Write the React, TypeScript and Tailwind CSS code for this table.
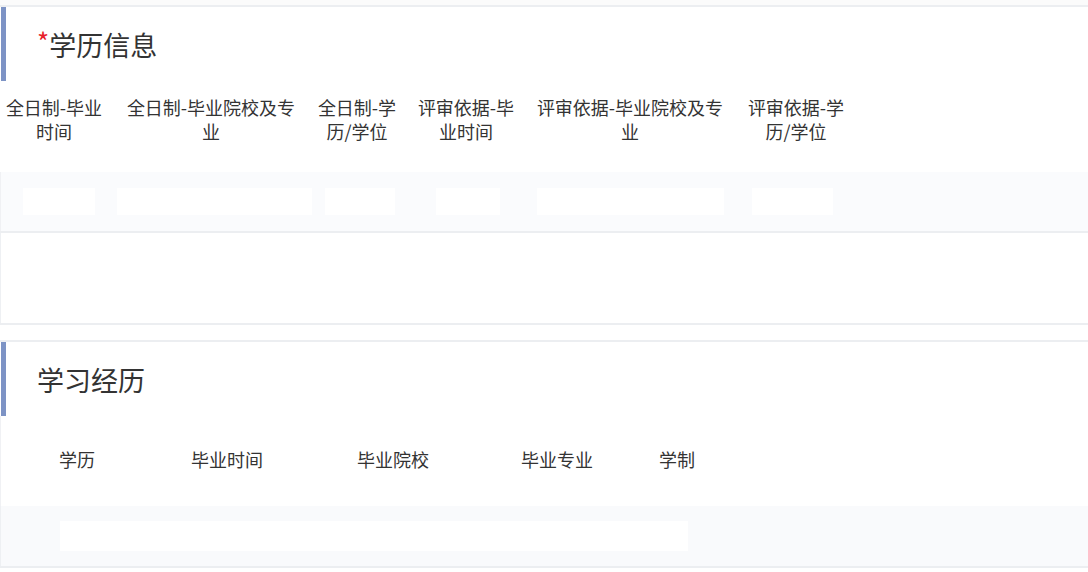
import React from "react";

const font = { fontFamily: '"Noto Sans CJK SC", "Noto Sans", sans-serif' };

function Line() {
  return <div className="h-[2px] bg-[#eceef1]" />;
}

function TitleBlock({ children }: { children: React.ReactNode }) {
  return (
    <div className="flex h-[74px] items-stretch">
      <div className="ml-[1px] w-[5px] bg-[#7d93c5]" />
      <div className="flex items-center pl-[31px] text-[27px] leading-none text-[#333333]">
        <div>{children}</div>
      </div>
    </div>
  );
}

const cols1 = [
  { w: 108, l1: "全日制-毕业", l2: "时间", box: [22, 72] },
  { w: 206, l1: "全日制-毕业院校及专", l2: "业", box: [9, 195] },
  { w: 86, l1: "全日制-学", l2: "历/学位", box: [11, 70] },
  { w: 132, l1: "评审依据-毕", l2: "业时间", box: [36, 64] },
  { w: 196, l1: "评审依据-毕业院校及专", l2: "业", box: [5, 187] },
  { w: 136, l1: "评审依据-学", l2: "历/学位", box: [24, 81] },
];

const cols2 = [
  { w: 152, t: "学历" },
  { w: 148, t: "毕业时间" },
  { w: 184, t: "毕业院校" },
  { w: 144, t: "毕业专业" },
  { w: 96, t: "学制" },
];

export default function App() {
  return (
    <div className="w-[1088px] h-[572px] overflow-hidden bg-white" style={font}>
      <div className="h-[5px] bg-[#fbfbfb]" />
      <Line />
      <TitleBlock>
        <span className="relative top-[-4px] text-[26px] text-[#e8202a]">*</span>
        <span>学历信息</span>
      </TitleBlock>
      <div className="flex h-[91px] pt-[14px] text-[18px] leading-[24px] text-[#333333]">
        {cols1.map((c, i) => (
          <div key={i} className="text-center" style={{ width: c.w }}>
            {c.l1}
            <br />
            {c.l2}
          </div>
        ))}
      </div>
      <div className="flex h-[59px] items-center bg-[#fafbfd] border-l border-[#f0f1f4]">
        {cols1.map((c, i) => (
          <div key={i} className="flex h-[27px]" style={{ width: i === 0 ? c.w - 1 : c.w }}>
            <div className="bg-white" style={{ marginLeft: c.box[0], width: c.box[1] }} />
          </div>
        ))}
      </div>
      <Line />
      <div className="h-[90px] border-l border-[#eef0f3] bg-white" />
      <Line />
      <div className="h-[15px] bg-white" />
      <Line />
      <TitleBlock>
        <span>学习经历</span>
      </TitleBlock>
      <div className="flex h-[90px] pt-[31px] text-[18px] leading-[24px] text-[#333333] border-l border-[#f0f1f4]">
        {cols2.map((c, i) => (
          <div key={i} className="text-center" style={{ width: c.w }}>
            {c.t}
          </div>
        ))}
      </div>
      <div className="flex h-[60px] items-center bg-[#f9fafc] border-l border-[#eef0f3]">
        <div className="ml-[59px] h-[30px] w-[628px] bg-white" />
      </div>
      <Line />
      <div className="h-[10px] bg-white" />
    </div>
  );
}
